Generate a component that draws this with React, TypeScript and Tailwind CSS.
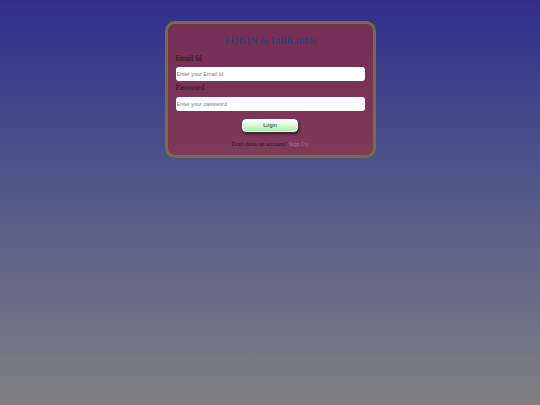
export default function App() {
  return (
    <div className="min-h-[405px] w-full bg-gradient-to-b from-[#302e8a] to-[#808080] flex justify-center pt-[21px] font-['Liberation_Serif',serif]">
      <div className="w-[211px] h-[137px] self-start rounded-[10px] border-[3px] border-[#75703f] bg-gradient-to-b from-[#762d56] to-[#7f3959] px-[8px] pt-[7px]">
        <h1 className="text-center text-[10px] font-bold text-[#25457a] leading-[20px]">LOGIN to InitRabbit</h1>
        <form className="flex flex-col">
          <label className="font-['Liberation_Serif',serif] text-[7.5px] leading-[10px] text-[#1a1a1a] mt-[3px]">Email Id</label>
          <input
            placeholder="Enter your Email Id"
            className="mt-[3px] h-[14px] w-full rounded-[3px] bg-white px-[1px] text-[5.5px] font-['Liberation_Sans',sans-serif] placeholder:text-[#7a7a7a] outline-none"
          />
          <label className="font-['Liberation_Serif',serif] text-[7.5px] leading-[10px] text-[#1a1a1a] mt-[2px]">Password</label>
          <input
            type="password"
            placeholder="Enter your password"
            className="mt-[4px] h-[14px] w-full rounded-[3px] bg-white px-[1px] text-[5.5px] font-['Liberation_Sans',sans-serif] placeholder:text-[#7a7a7a] outline-none"
          />
          <div className="flex justify-center mt-[8px]">
            <button
              type="button"
              className="w-[56px] h-[13px] rounded-[4px] bg-gradient-to-b from-white to-[#a6f2ac] border border-white text-[5.5px] font-['Liberation_Sans',sans-serif] text-[#1a1a1a] shadow-[1px_2px_3px_rgba(0,0,0,0.5)]"
            >
              Login
            </button>
          </div>
          <p className="text-center text-[6px] leading-[8px] mt-[8px] text-[#1a1a1a]">
            Don't have an account? <span className="text-[#a77b93]">Sign Up</span>
          </p>
        </form>
      </div>
    </div>
  );
}
